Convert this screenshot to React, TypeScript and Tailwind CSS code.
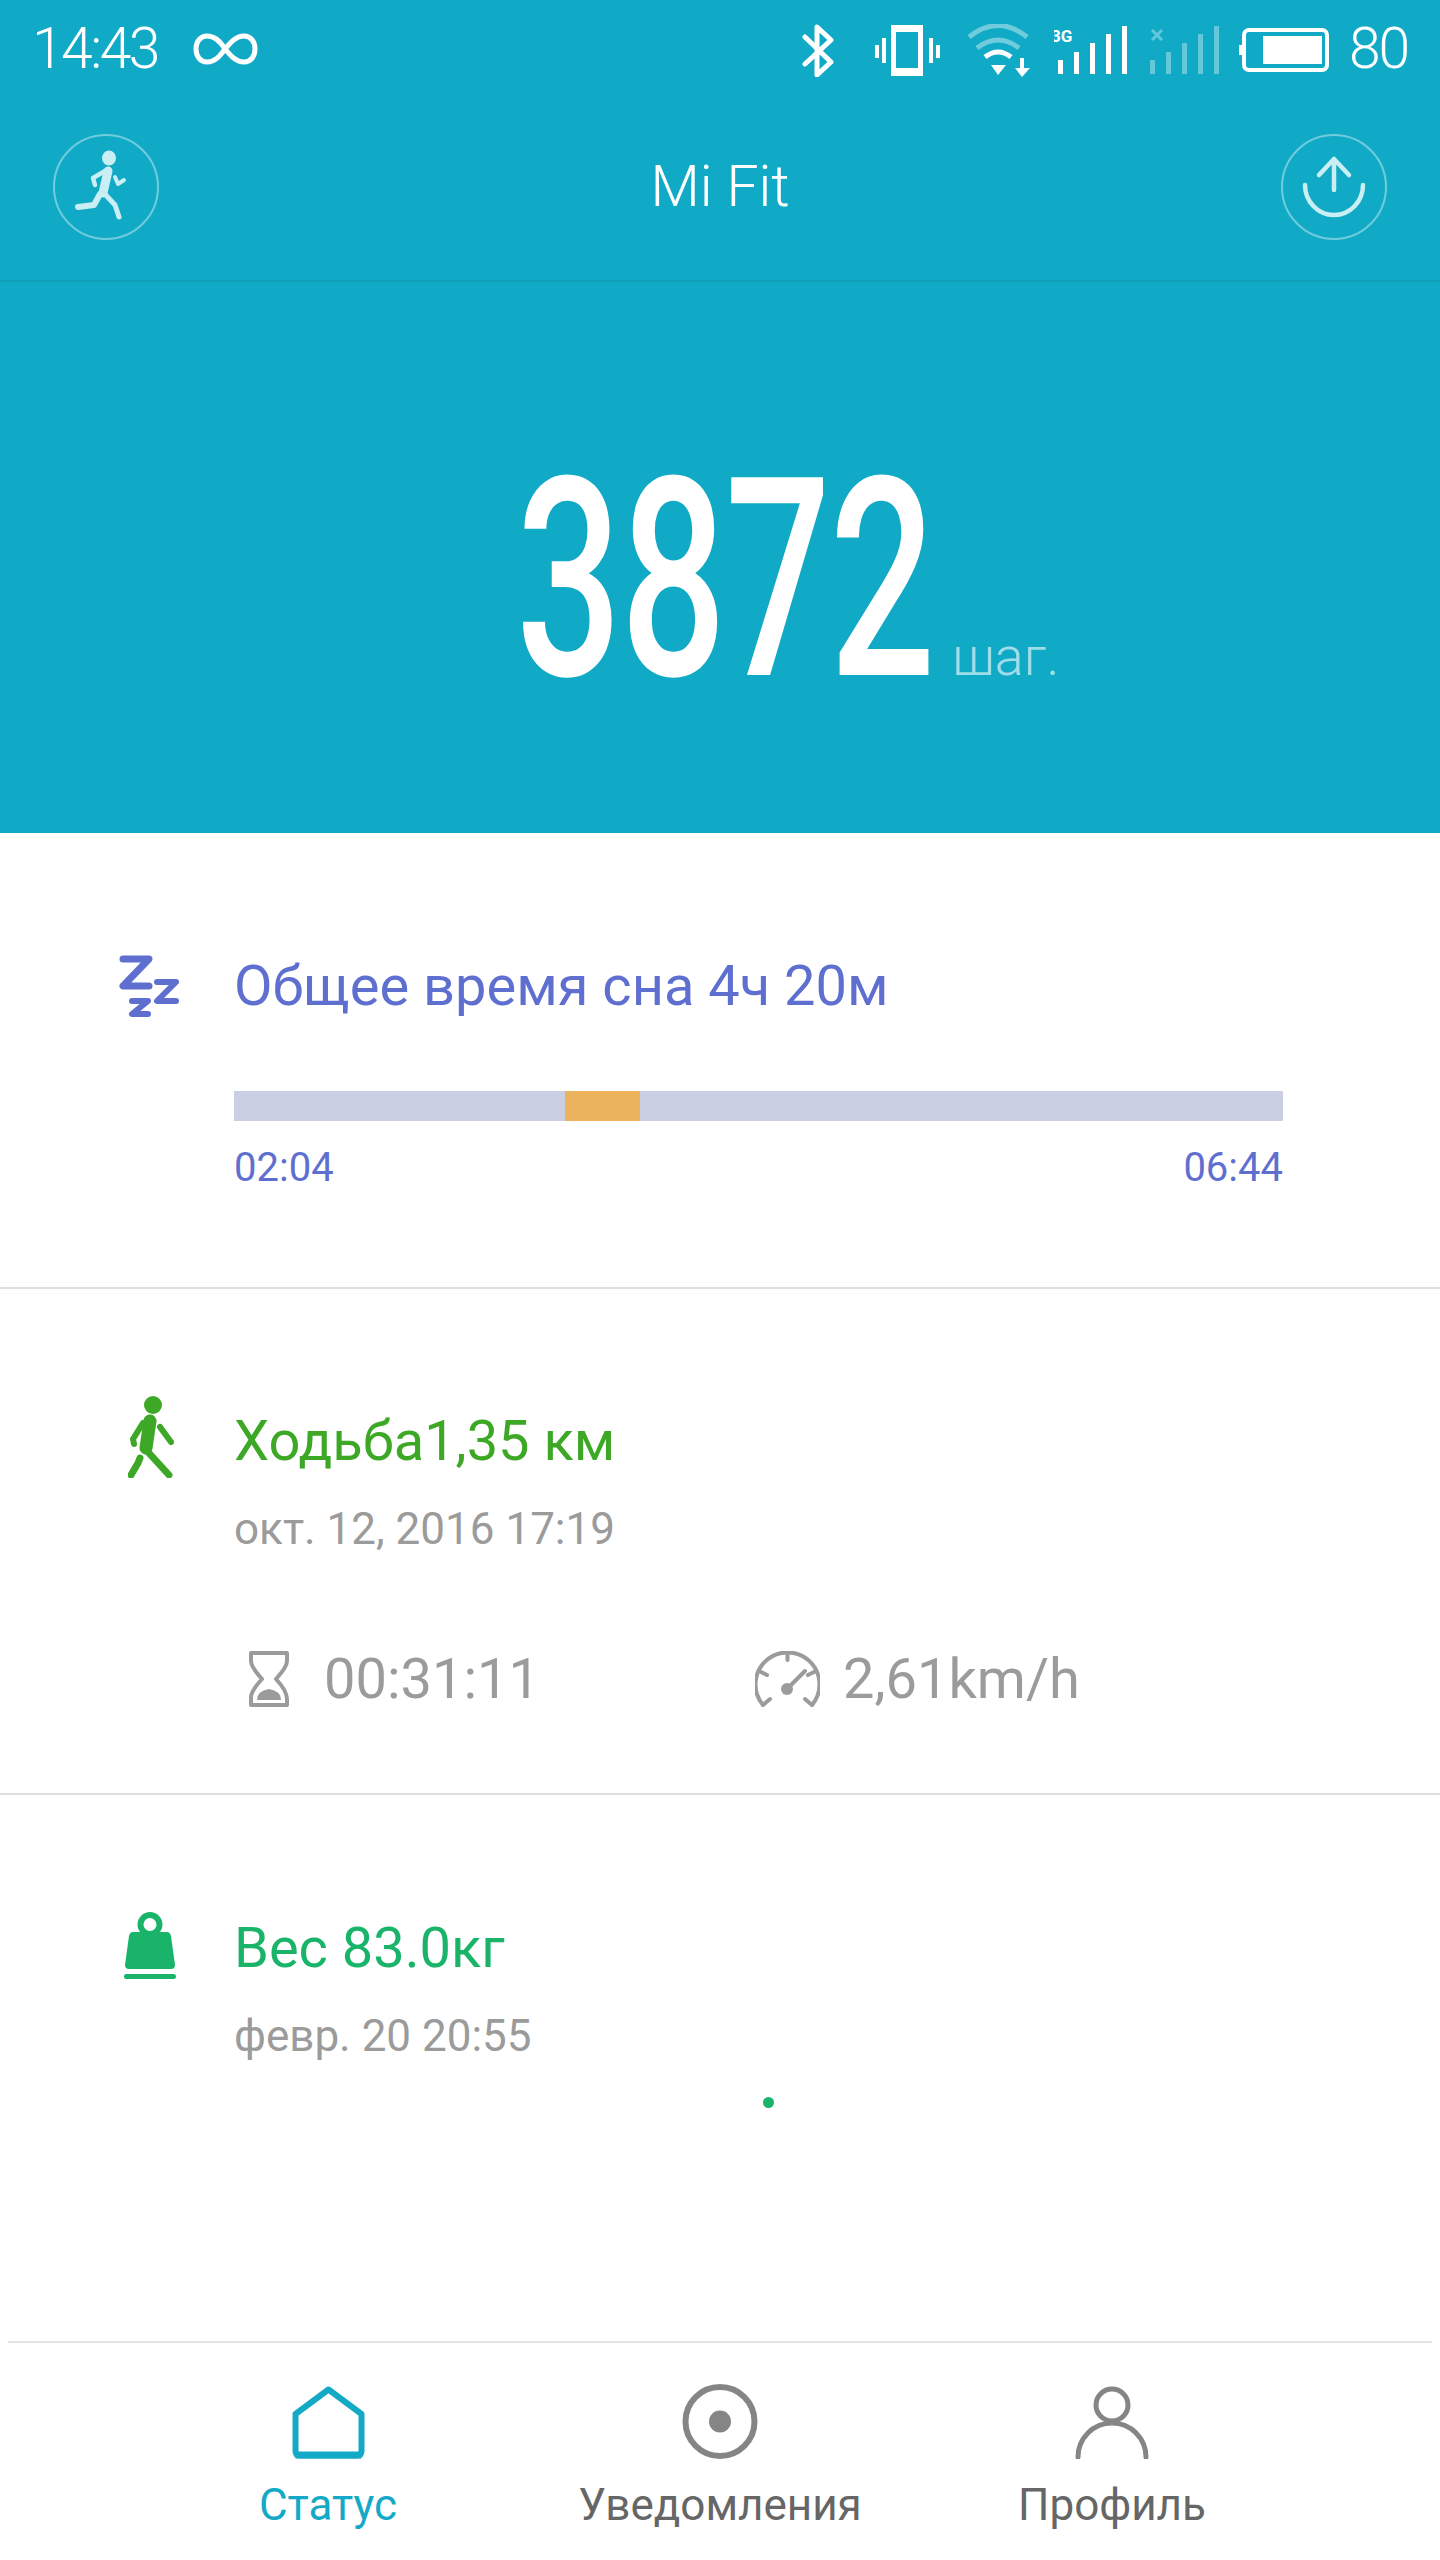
export default function App() {
  const bars = [
    { x: 0, h: 14 },
    { x: 16, h: 22 },
    { x: 32, h: 31 },
    { x: 48, h: 40 },
    { x: 64, h: 48 },
  ];
  return (
    <div className="w-[1440px] h-[2560px] flex flex-col bg-white overflow-hidden [font-family:Roboto,sans-serif]">
      {/* Status bar */}
      <div className="h-[96px] bg-[#11aac6] flex items-start pt-[24px] pl-[32px] text-white">
        <span className="-mt-[3px] text-[57px] leading-[56px] font-light tracking-[-2.5px] w-[161px]">14:43</span>
        <svg width="65" height="32" viewBox="0 0 65 32" fill="none" stroke="#fff" strokeWidth="5" className="mt-[9px]">
          <path d="M32 16C26 6 20 3 14 3C7 3 3 9 3 16C3 23 7 29 14 29C22 29 27 23 32 16C38 9 43 3 51 3C58 3 62 9 62 16C62 23 58 29 51 29C43 29 38 23 32 16Z" />
        </svg>
        <svg width="32" height="53" viewBox="0 0 32 53" fill="none" stroke="#fff" strokeWidth="5" strokeLinejoin="round" strokeLinecap="round" className="ml-[544px]">
          <path d="M3 13L29 38L15 51V3L29 16L3 40" />
        </svg>
        <svg width="65" height="51" viewBox="0 0 65 51" className="ml-[41px] mt-[1px]" fill="#fff">
          <path fillRule="evenodd" d="M16 0H48V51H16ZM21 7V43H43V7Z" />
          <rect x="0" y="20" width="4" height="13" />
          <rect x="7" y="13" width="4" height="25" />
          <rect x="54" y="13" width="4" height="25" />
          <rect x="61" y="20" width="4" height="13" />
        </svg>
        <svg width="64" height="53" viewBox="0 0 64 53" fill="none" className="ml-[27px]">
          <path d="M2 13Q31 -10 60 13" stroke="#fff" strokeOpacity=".4" strokeWidth="5" />
          <path d="M10 24Q31 8 52 24" stroke="#fff" strokeOpacity=".4" strokeWidth="5" />
          <path d="M18 33Q31 23 44 33" stroke="#fff" strokeWidth="5" />
          <polygon points="24,41 39,41 31,51" fill="#fff" />
          <path d="M55 34V48" stroke="#fff" strokeWidth="4" />
          <polygon points="48,44 63,44 55,53" fill="#fff" />
        </svg>
        <svg width="73" height="51" viewBox="0 0 73 51" className="ml-[23px]" fill="#fff">
          <text x="-3" y="18" fontSize="17" fontWeight="700" fontFamily="Roboto, sans-serif">3G</text>
          {bars.map((b) => (
            <rect key={b.x} x={b.x + 4} y={50 - b.h} width="5" height={b.h} />
          ))}
        </svg>
        <svg width="70" height="51" viewBox="0 0 70 51" className="ml-[23px]" fill="#fff" fillOpacity=".35">
          <path d="M2 6L12 16M12 6L2 16" stroke="#fff" strokeOpacity=".35" strokeWidth="3" />
          {bars.map((b) => (
            <rect key={b.x} x={b.x} y={50 - b.h} width="5" height={b.h} />
          ))}
        </svg>
        <svg width="90" height="44" viewBox="0 0 90 44" fill="none" className="ml-[19px] mt-[4px]">
          <rect x="5" y="2" width="83" height="40" rx="5" stroke="#fff" strokeWidth="4" />
          <rect x="0" y="17" width="3" height="10" fill="#fff" />
          <rect x="24" y="8" width="59" height="28" fill="#fff" />
        </svg>
        <span className="-mt-[3px] ml-[20px] text-[57px] leading-[56px] font-light tracking-[-2px]">80</span>
      </div>

      {/* Header */}
      <div className="h-[186px] bg-[#11aac6] border-b-2 border-[#0f9fb9] flex items-center justify-between pl-[53px] pr-[53px] pb-[2px]">
        <div className="w-[106px] h-[106px] rounded-full border-2 border-white/40 relative shrink-0">
          <svg width="106" height="106" viewBox="0 0 106 106" fill="none" stroke="#c9eef4" strokeLinecap="round" strokeLinejoin="round" className="absolute -left-[2px] -top-[2px]">
            <ellipse cx="56" cy="24" rx="7" ry="7.5" fill="#c9eef4" stroke="none" />
            <path d="M55 37L50 59" strokeWidth="9" />
            <path d="M52 37L40 44L42 51" strokeWidth="4.5" />
            <path d="M62 43L65 50L71 46" strokeWidth="4" />
            <path d="M47 60L41 71L25 73" strokeWidth="6" />
            <path d="M50 58L62 71L66 83" strokeWidth="5" />
          </svg>
        </div>
        <span className="text-white text-[57px] leading-[70px] font-light">Mi Fit</span>
        <div className="w-[106px] h-[106px] rounded-full border-2 border-white/40 relative shrink-0">
          <svg width="106" height="106" viewBox="0 0 106 106" fill="none" stroke="#c9eef4" strokeWidth="4.5" strokeLinecap="round" strokeLinejoin="round" className="absolute -left-[2px] -top-[2px]">
            <path d="M53 25V56M38 41L53 25L68 41" />
            <path d="M24 51A29 30 0 0 0 82 51" />
          </svg>
        </div>
      </div>

      {/* Hero */}
      <div className="h-[551px] bg-[#11aac6] flex items-baseline pt-[198px] pl-[516px]">
        <span className="block w-[426px] shrink-0 text-white text-[278px] leading-[200px] font-medium origin-left scale-x-[0.67] whitespace-nowrap">
          <span className="tracking-[-2px]">3872</span>
        </span>
        <span className="ml-[10px] text-[54px] leading-[60px] font-light text-white/60">шаг.</span>
      </div>

      {/* Sleep */}
      <div className="h-[456px] border-b-2 border-[#dfdfdf] pt-[118px] text-[#5f6fd0]">
        <div className="flex items-center h-[70px]">
          <div className="w-[234px] pl-[119px] shrink-0">
            <svg width="61" height="63" viewBox="0 0 61 63" fill="none" stroke="#5f6fd0" strokeLinecap="round" strokeLinejoin="round">
              <path d="M4 4H30L4 31H30" strokeWidth="7" />
              <path d="M38 27H57L38 46H57" strokeWidth="6" />
              <path d="M13 46H29L13 59H29" strokeWidth="6" />
            </svg>
          </div>
          <span className="text-[56px] leading-[70px]">Общее время сна 4ч 20м</span>
        </div>
        <div className="ml-[234px] w-[1049px] h-[30px] mt-[70px] bg-[#cbcfe4] flex">
          <div className="ml-[331px] w-[75px] bg-[#ebb35c]" />
        </div>
        <div className="ml-[234px] w-[1049px] mt-[22px] flex justify-between text-[40px] leading-[50px]">
          <span>02:04</span>
          <span>06:44</span>
        </div>
      </div>

      {/* Walking */}
      <div className="h-[506px] border-b-2 border-[#dfdfdf] pt-[117px]">
        <div className="flex items-center h-[70px]">
          <div className="w-[234px] pl-[128px] shrink-0">
            <svg width="46" height="82" viewBox="0 0 46 82" fill="none" stroke="#3ca826" strokeLinecap="round" strokeLinejoin="round" className="-mt-[8px]">
              <circle cx="25" cy="9" r="9" fill="#3ca826" stroke="none" />
              <path d="M22 25L18 52" strokeWidth="13" />
              <path d="M15 27L5 43L6 48" strokeWidth="6" />
              <path d="M32 31L43 46" strokeWidth="6" />
              <path d="M20 56L41 79" strokeWidth="7" />
              <path d="M12 62L10 67L3 79" strokeWidth="7" />
            </svg>
          </div>
          <span className="text-[56px] leading-[70px] text-[#3ca826]">Ходьба1,35 км</span>
        </div>
        <div className="ml-[234px] mt-[25px] text-[44px] leading-[56px] text-[#9b9b9b]">окт. 12, 2016 17:19</div>
        <div className="flex items-center h-[70px] mt-[87px] text-[56px] text-[#9b9b9b]">
          <svg width="42" height="56" viewBox="0 0 42 56" fill="none" stroke="#9b9b9b" strokeWidth="4" strokeLinejoin="round" className="ml-[248px] shrink-0">
            <path d="M3 2H39V10Q39 16 28 28Q39 40 39 48V54H3V46Q3 40 14 28Q3 16 3 10Z" />
            <path d="M9 49Q9 40 21 38Q33 40 33 49Z" fill="#9b9b9b" stroke="none" />
          </svg>
          <span className="ml-[34px] w-[431px] shrink-0 leading-[70px]">00:31:11</span>
          <svg width="65" height="56" viewBox="0 0 65 56" fill="none" stroke="#9b9b9b" strokeWidth="4" strokeLinecap="round" className="shrink-0">
            <path d="M8 54A32 32 0 1 1 57 54" />
            <path d="M8 54L15 48M57 54L50 48M32.5 2V9M6 21L12 24M59 21L53 24M32 38L50 20" />
            <circle cx="32" cy="38" r="6" fill="#9b9b9b" stroke="none" />
          </svg>
          <span className="ml-[23px] leading-[70px]">2,61km/h</span>
        </div>
      </div>

      {/* Weight */}
      <div className="flex-1 pt-[118px]">
        <div className="flex items-center h-[70px]">
          <div className="w-[234px] pl-[124px] shrink-0">
            <svg width="52" height="67" viewBox="0 0 52 67" fill="#19b46a" className="-mt-[6px]">
              <circle cx="26" cy="12.5" r="9.5" fill="none" stroke="#19b46a" strokeWidth="6" />
              <path d="M9 20H43Q46 20 47 24L51 53Q51 57 47 57H5Q1 57 1 53L5 24Q6 20 9 20Z" />
              <rect x="0" y="62" width="52" height="5" rx="2.5" />
            </svg>
          </div>
          <span className="text-[56px] leading-[70px] text-[#19b46a]">Вес 83.0кг</span>
        </div>
        <div className="ml-[234px] mt-[25px] text-[44px] leading-[56px] text-[#9b9b9b]">февр. 20 20:55</div>
        <div className="ml-[763px] mt-[33px] w-[11px] h-[11px] rounded-full bg-[#19b46a]" />
      </div>

      {/* Tab bar */}
      <div className="h-[219px] px-[132px] relative grid grid-cols-3 pt-[45px]">
        <div className="absolute left-[8px] right-[8px] top-0 h-[2px] bg-[#e4e4e4]" />
        <div className="flex flex-col items-center text-[#14a9c6]">
          <svg width="73" height="73" viewBox="0 0 73 73" fill="none" stroke="#14a9c6" strokeWidth="6" strokeLinejoin="round">
            <path d="M3.5 28L36.5 3.5L69.5 28V65Q69.5 69.5 65 69.5H8Q3.5 69.5 3.5 65Z" />
            <path d="M3.5 69H69.5" strokeWidth="7" />
          </svg>
          <span className="mt-[18px] text-[44px] leading-[56px]">Статус</span>
        </div>
        <div className="flex flex-col items-center text-[#666666]">
          <svg width="76" height="75" viewBox="0 0 76 75" fill="none" stroke="#858585" strokeWidth="6" className="-mt-[2px]">
            <circle cx="38" cy="37.5" r="34.5" />
            <circle cx="38" cy="37.5" r="11" fill="#858585" stroke="none" />
          </svg>
          <span className="mt-[18px] text-[44px] leading-[56px]">Уведомления</span>
        </div>
        <div className="flex flex-col items-center text-[#666666]">
          <svg width="74" height="73" viewBox="0 0 74 73" fill="none" stroke="#858585" strokeWidth="5" strokeLinecap="round">
            <circle cx="37" cy="19" r="16" />
            <path d="M3 71A34 34 0 0 1 71 71" />
          </svg>
          <span className="mt-[18px] text-[44px] leading-[56px]">Профиль</span>
        </div>
      </div>
    </div>
  );
}
